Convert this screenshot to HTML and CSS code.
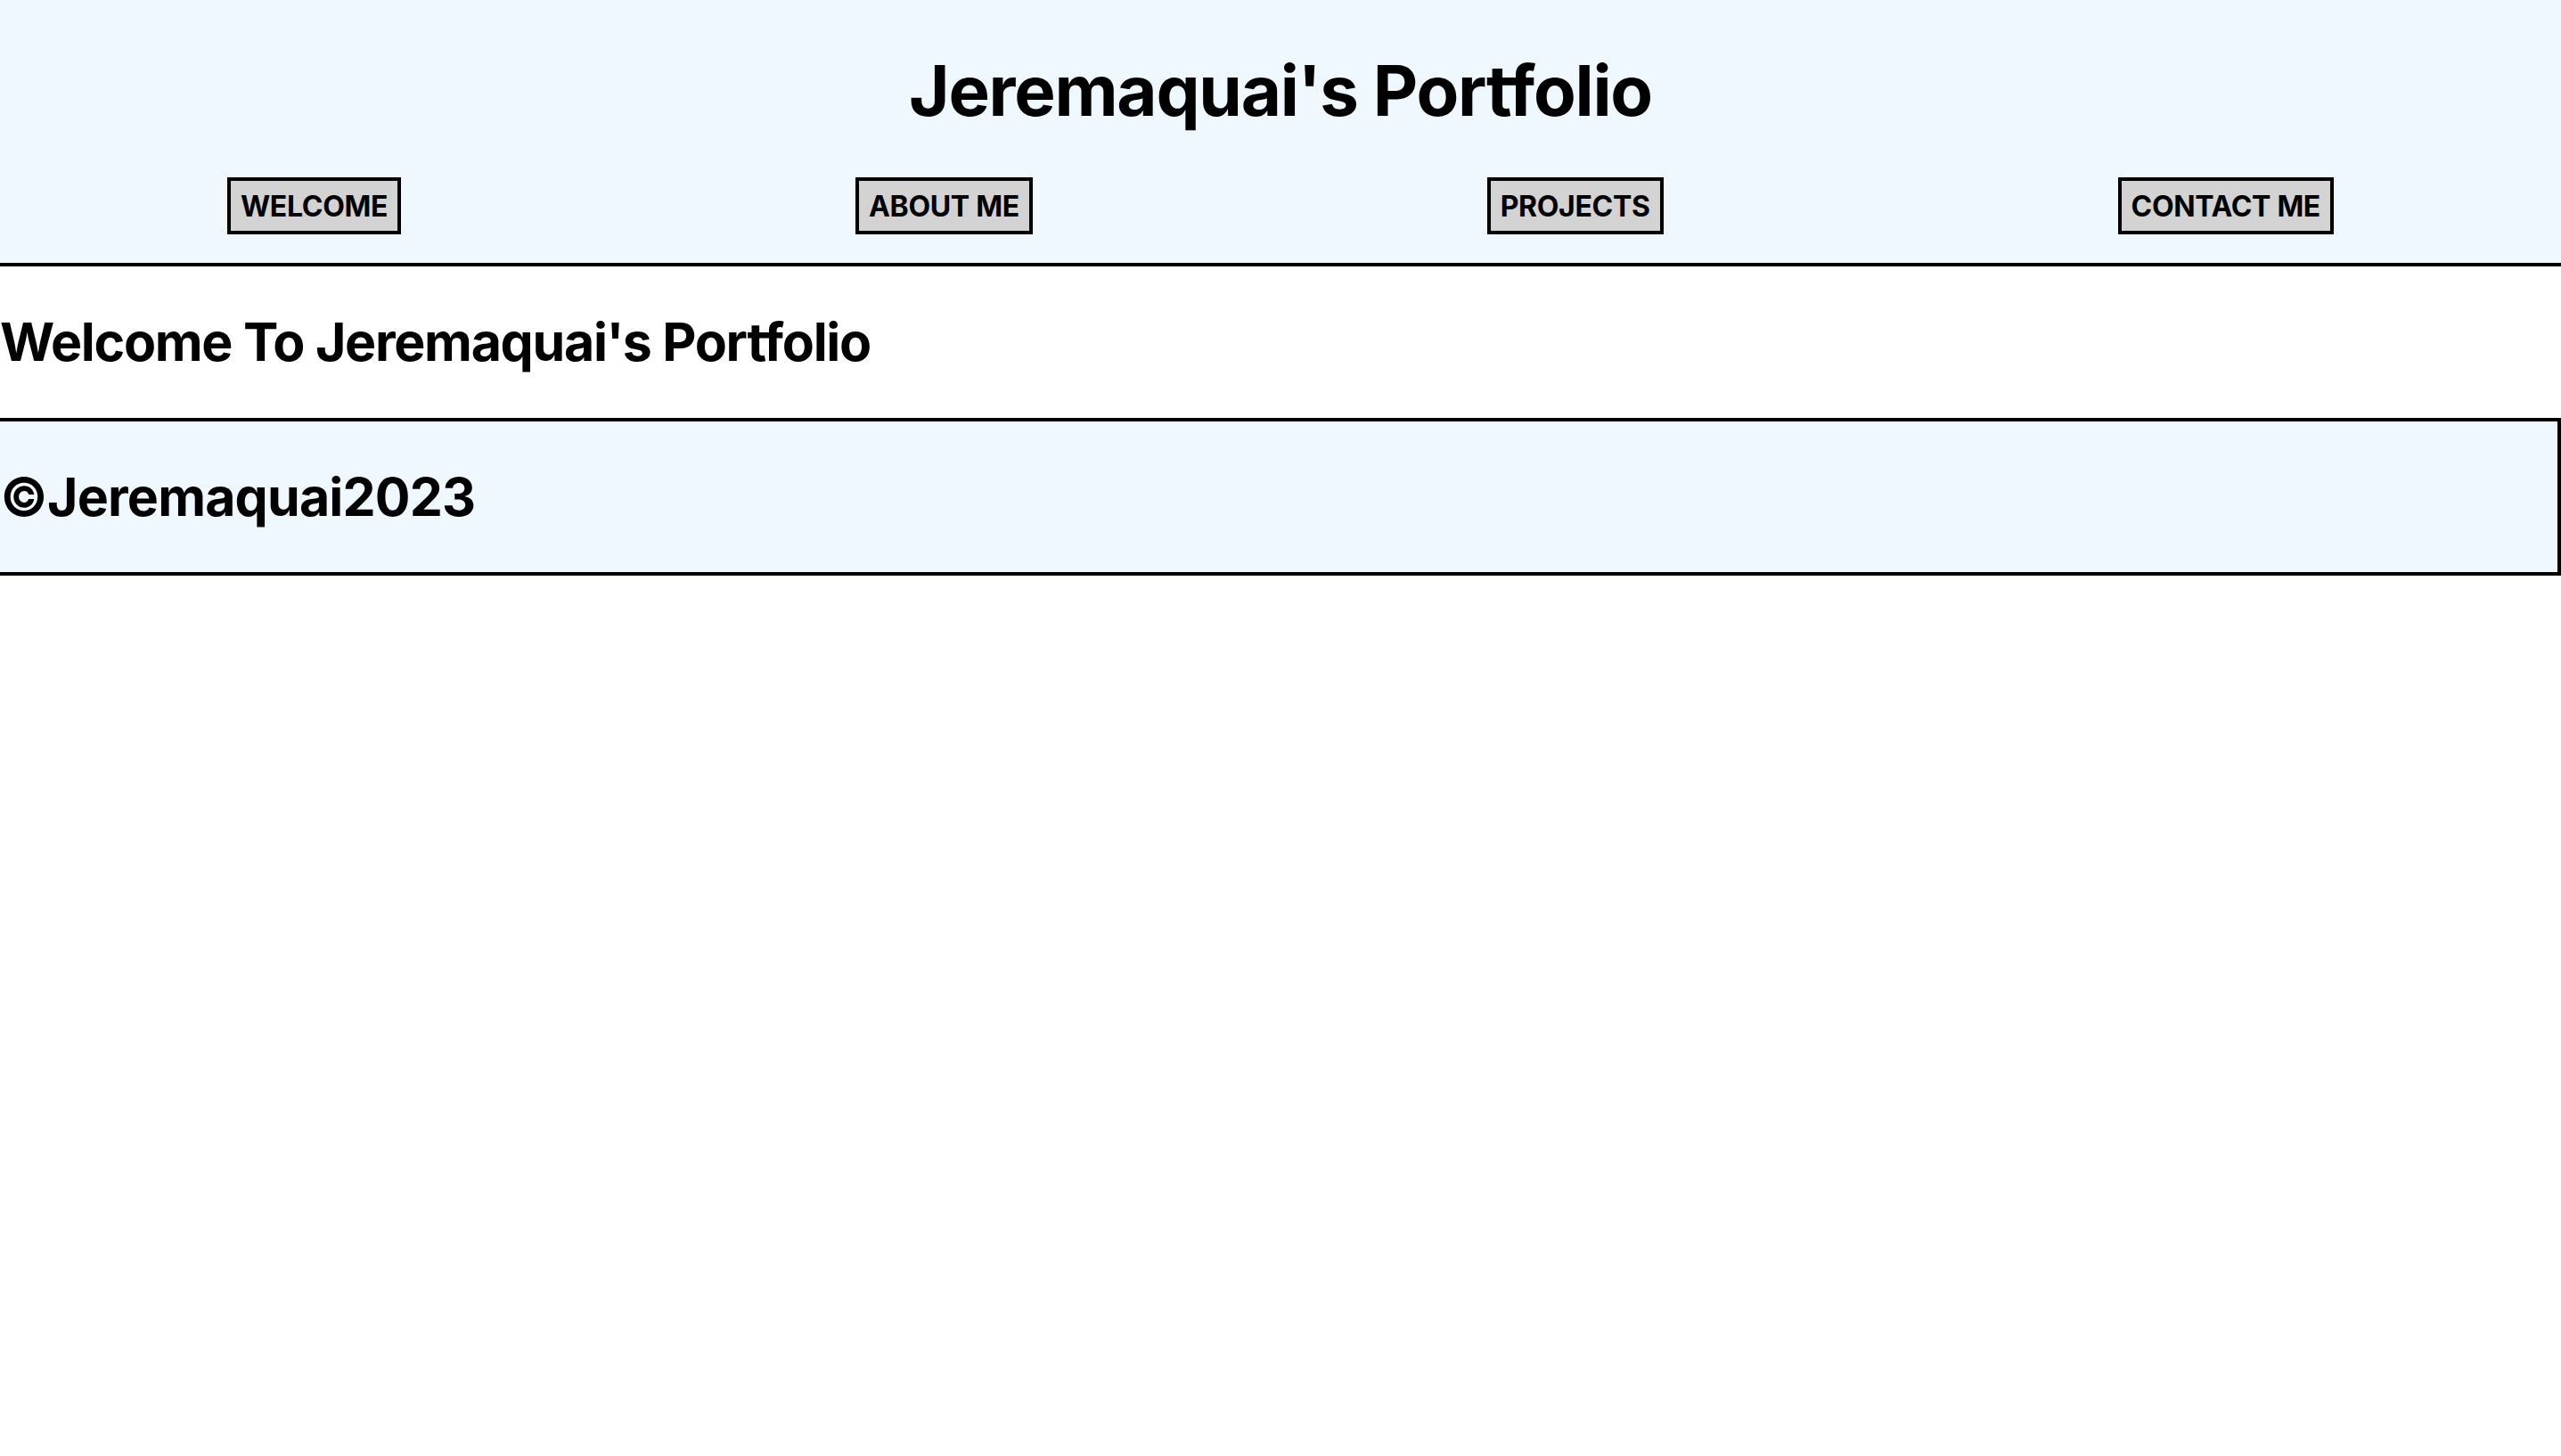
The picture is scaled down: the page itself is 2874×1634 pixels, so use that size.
FILE: index.html
```html
<!DOCTYPE html>
<html lang="en">
<head>
<meta charset="utf-8">
<title>Jeremaquai's Portfolio</title>
<link rel="stylesheet" href="styles.css">
</head>
<body>
<header class="site-header">
  <h1 class="site-title">Jeremaquai's Portfolio</h1>
  <nav class="site-nav">
    <button class="nav-btn">WELCOME</button>
    <button class="nav-btn">ABOUT ME</button>
    <button class="nav-btn">PROJECTS</button>
    <button class="nav-btn">CONTACT ME</button>
  </nav>
</header>
<main class="welcome">
  <h2 class="welcome-title">Welcome To Jeremaquai's Portfolio</h2>
</main>
<footer class="site-footer">
  <h2 class="footer-text">&copy;Jeremaquai2023</h2>
</footer>
</body>
</html>
```
FILE: styles.css
```css
html, body {
  margin: 0;
  padding: 0;
  background: #ffffff;
  color: #000000;
  font-family: Inter, "Noto Sans", sans-serif;
}

.site-header {
  background: #f0f8ff;
  border-bottom: 4px solid #000;
  padding: 0 0 32px;
  display: flow-root;
}

.site-title {
  margin: 54px 0 50px;
  font-size: 78px;
  line-height: 95px;
  font-weight: 700;
  text-align: center;
  letter-spacing: -0.016em;
}

.site-nav {
  display: flex;
  justify-content: space-around;
  align-items: center;
}

.nav-btn {
  height: 64px;
  box-sizing: border-box;
  padding: 2px 11px 0;
  border: 4px solid #000;
  background: #d3d3d3;
  font-family: Inter, "Noto Sans", sans-serif;
  font-weight: 700;
  font-size: 32px;
  line-height: 1;
  color: #000;
  letter-spacing: -0.01em;
}

.welcome-title {
  margin: 49px 0 50px;
  font-size: 59px;
  line-height: 71px;
  font-weight: 700;
  letter-spacing: -0.022em;
}

.site-footer {
  background: #f0f8ff;
  border: 4px solid #000;
  border-left: none;
  display: flow-root;
}

.footer-text {
  margin: 49px 0;
  font-size: 59px;
  line-height: 71px;
  font-weight: 700;
  letter-spacing: -0.014em;
}
```
